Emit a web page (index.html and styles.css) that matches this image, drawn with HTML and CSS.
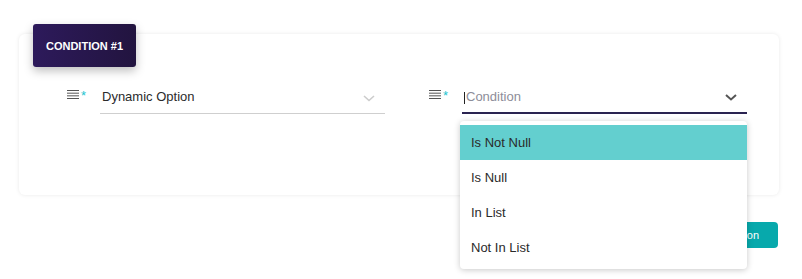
FILE: index.html
```html
<!DOCTYPE html>
<html>
<head>
<meta charset="utf-8">
<link rel="stylesheet" href="styles.css">
</head>
<body>
<div class="page">
  <div class="card">
    <div class="badge">CONDITION #1</div>
    <div class="row">
      <div class="field">
        <div class="label">
          <svg class="lines" width="12" height="9" viewBox="0 0 12 9"><rect x="0" y="0" width="12" height="1" /><rect x="0" y="2.67" width="12" height="1"/><rect x="0" y="5.33" width="12" height="1"/><rect x="0" y="8" width="12" height="1"/></svg>
          <span class="req">*</span>
        </div>
        <div class="select">
          <span class="value">Dynamic Option</span>
          <svg class="chev light" width="12" height="7" viewBox="0 0 12 7"><path d="M1 1 L6 5.5 L11 1" fill="none" stroke-width="1.6"/></svg>
        </div>
      </div>
      <div class="field">
        <div class="label">
          <svg class="lines" width="12" height="9" viewBox="0 0 12 9"><rect x="0" y="0" width="12" height="1" /><rect x="0" y="2.67" width="12" height="1"/><rect x="0" y="5.33" width="12" height="1"/><rect x="0" y="8" width="12" height="1"/></svg>
          <span class="req">*</span>
        </div>
        <div class="select focused">
          <span class="caret"></span><span class="placeholder">Condition</span>
          <svg class="chev dark" width="12" height="7" viewBox="0 0 12 7"><path d="M1 1 L6 5.5 L11 1" fill="none" stroke-width="2"/></svg>
          <ul class="menu">
            <li class="item active">Is Not Null</li>
            <li class="item">Is Null</li>
            <li class="item">In List</li>
            <li class="item">Not In List</li>
          </ul>
        </div>
      </div>
    </div>
  </div>
  <div class="actions">
    <button class="btn">Add Condition</button>
  </div>
</div>
</body>
</html>
```
FILE: styles.css
```css
html, body {
  margin: 0;
  background: #ffffff;
  font-family: "Liberation Sans", Arial, sans-serif;
}
body {
  min-height: 279px;
}
.page {
  padding: 34px 23px 0 19px;
}
.card {
  position: relative;
  background: #fff;
  border-radius: 6px;
  box-shadow: 0 0 4px rgba(0, 0, 0, 0.09);
  padding: 55px 32px 81px 48px;
}
.badge {
  position: absolute;
  top: -10px;
  left: 14px;
  width: 103px;
  height: 43px;
  display: flex;
  align-items: center;
  justify-content: center;
  background: linear-gradient(90deg, #2d1a5b, #22143f);
  color: #fff;
  font-size: 11px;
  font-weight: bold;
  border-radius: 3px;
  box-shadow: 0 4px 10px rgba(0, 0, 0, 0.25);
}
.row {
  display: flex;
  gap: 44px;
}
.field {
  display: flex;
  width: 318px;
}
.label {
  width: 33px;
  display: flex;
  align-items: flex-start;
  padding-top: 1px;
  box-sizing: border-box;
}
.lines {
  fill: #555;
  display: block;
}
.req {
  color: #22c3cf;
  font-size: 13px;
  line-height: 10px;
  margin-left: 2px;
  margin-top: 1px;
}
.select {
  position: relative;
  flex: 1;
  display: flex;
  align-items: flex-start;
  padding: 0 0 8px 2px;
  line-height: 16px;
  font-size: 13px;
  border-bottom: 1px solid #cfcfcf;
}
.select.focused {
  border-bottom: 2px solid #2a2350;
  padding-bottom: 7px;
}
.value {
  color: #2b2b2b;
  flex: 1;
}
.caret {
  width: 1px;
  height: 12px;
  margin-top: 3px;
  background: #222;
  margin-right: 1px;
}
.placeholder {
  color: #8d8d99;
  flex: 1;
}
.chev {
  margin: 6px 10px 0 0;
}
.chev.light { stroke: #cccccc; }
.chev.dark { stroke: #555; margin-top: 5px; }
.menu {
  position: absolute;
  top: calc(100% + 9px);
  left: -2px;
  width: 287px;
  margin: 0;
  padding: 4px 0;
  list-style: none;
  background: #fff;
  border-radius: 4px;
  box-shadow: 0 1px 6px rgba(0, 0, 0, 0.22);
  z-index: 5;
}
.item {
  height: 35px;
  line-height: 35px;
  padding-left: 11px;
  color: #2a2a2a;
  font-size: 13px;
}
.item.active {
  background: #63cfcf;
}
.actions {
  display: flex;
  justify-content: flex-end;
  margin-top: 27px;
  padding-right: 1px;
}
.btn {
  height: 26px;
  border: none;
  border-radius: 4px;
  background: #07a9ac;
  color: #fff;
  font-family: "Liberation Sans", Arial, sans-serif;
  font-size: 11px;
  padding: 0 19px 0 18px;
}
```
